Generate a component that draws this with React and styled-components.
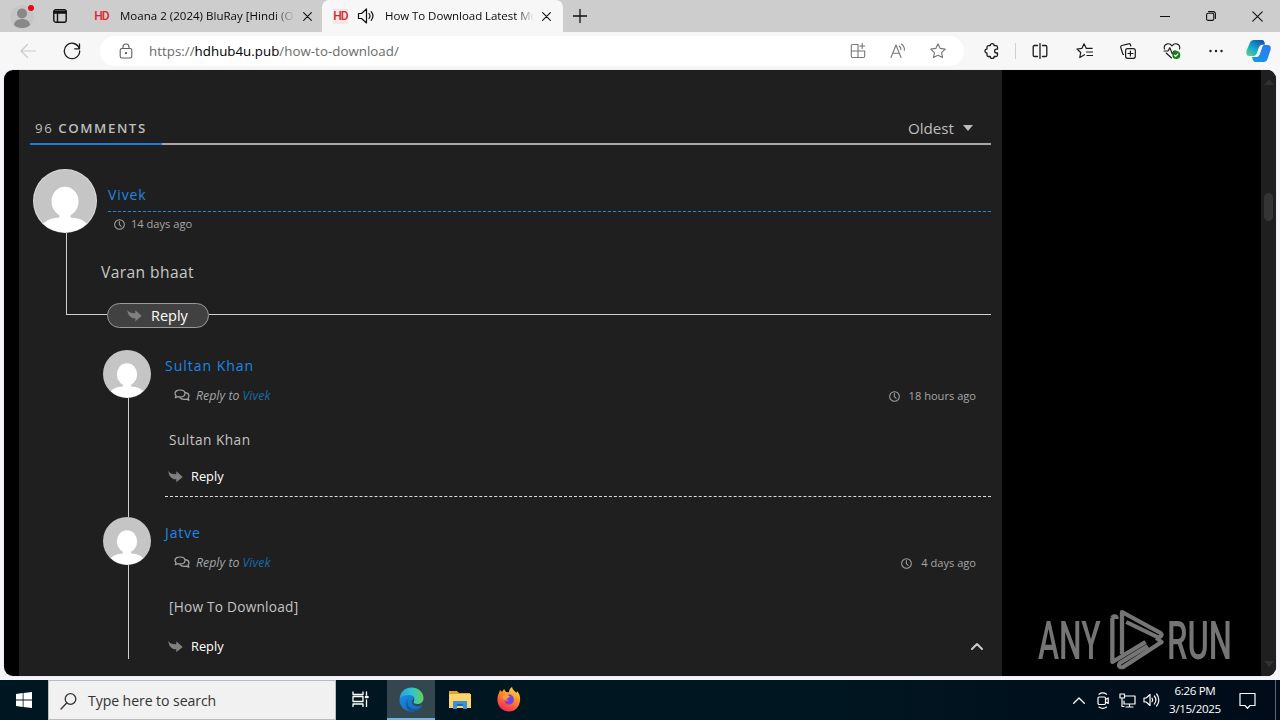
import React from "react";
import styled, { createGlobalStyle } from "styled-components";

const Global = createGlobalStyle`
  * { box-sizing: border-box; }
  html, body { margin: 0; padding: 0; }
  body { width: 1280px; height: 720px; overflow: hidden; font-family: "Open Sans", "Noto Sans", sans-serif; }
  svg { display: block; flex: none; }
`;

const Desktop = styled.div`
  width: 1280px; height: 720px; display: flex; flex-direction: column; background: #f4f5f8; overflow: hidden;
`;
const TabStrip = styled.div`
  height: 32px; flex: none; display: flex; background: #cdcdcd; color: #111;
`;
const Slot = styled.div`
  width: ${(p) => p.$w}px; flex: none; display: flex; align-items: center; justify-content: center;
  color: ${(p) => p.$c || "inherit"};
`;
const BackSlot = styled(Slot)`padding-left: 5px; color: #c9c9c9;`;
const NoticeSlot = styled(Slot)`padding-right: 8px;`;
const Tab = styled.div`
  width: ${(p) => p.$w}px; flex: none; display: flex; align-items: center;
  padding-left: ${(p) => p.$pad}px; border-radius: 7px 7px 0 0;
  background: ${(p) => (p.$active ? "#f7f7f7" : "transparent")};
`;
const Favicon = styled.span`
  width: 15px; height: 15px; flex: none; display: flex; align-items: center; justify-content: center;
  font: 500 12px/15px "Roboto", sans-serif; color: #cf2b35; letter-spacing: -1px;
  background: ${(p) => (p.$pale ? "#f8e6e6" : "#d9c8c8")};
`;
const TabTitle = styled.span`
  width: ${(p) => p.$w}px; margin-left: ${(p) => p.$ml}px; flex: none; white-space: nowrap;
  font-size: 11.5px; line-height: 18px; letter-spacing: ${(p) => p.$ls}px; color: #080808;
  mask-image: linear-gradient(90deg, #000 88%, transparent 100%);
`;
const Spacer = styled.div`flex: 1;`;

const Toolbar = styled.div`
  height: 38px; flex: none; display: flex; align-items: center; background: #f7f7f7; color: #1c1c1c;
  & > div { height: 38px; }
`;
const Toolicons = styled.div`display: flex; padding-left: 6px;`;
const Divider = styled.div`width: 1px; height: 16px; margin: 11px 2px 0; background: #cfcfcf;`;
const AddressWrap = styled.div`width: 864px; padding: 4px 0; margin-left: 6px;`;
const Address = styled.div`
  height: 30px; border-radius: 15px; background: #fff; display: flex; align-items: center; padding-left: 17px; padding-right: 6px;
`;
const Url = styled.span`
  margin-left: 15px; font-size: 13.3px; line-height: 20px; letter-spacing: 0.03px; color: #6b6b6b; white-space: nowrap;
  b { font-weight: 400; color: #000; }
`;

const Frame = styled.div`
  height: 606px; flex: none; margin: 0 4px; border-radius: 9px; overflow: hidden; display: flex; background: #000;
  box-shadow: 0 0 0 1px #eceef3;
`;
const Page = styled.div`width: 983px; margin-left: 15px; background: #1f1f1f; padding: 0 11px; display: flex; flex-direction: column;`;
const Side = styled.div`width: 259px; display: flex; align-items: flex-end; padding: 0 0 4px 36px;`;
const Scroll = styled.div`
  width: 15px; background: #1f1f1f; display: flex; flex-direction: column; align-items: center; color: #303030; padding: 9px 0 9px;
`;
const Thumb = styled.div`width: 9px; height: 28px; border-radius: 5px; background: #343434; margin: 108px 0 auto;`;

const Head = styled.div`
  height: 73px; flex: none; display: flex; justify-content: space-between; align-items: flex-end; padding: 0 18px 5px 5px; color: #bdbdbd;
`;
const Count = styled.div`
  font-size: 13.3px; line-height: 20px; letter-spacing: 1.55px; b { font-weight: 600; }
`;
const Sort = styled.div`display: flex; align-items: center; gap: 9px; font-size: 15.2px; line-height: 20px;`;
const Rule = styled.div`
  height: 2px; flex: none; background: #a9a5a8; display: flex;
  &::before { content: ""; width: 132px; background: #2279d8; }
`;

const Root = styled.div`margin-top: 24px; height: 134px; flex: none; display: flex;`;
const Rail = styled.div`width: ${(p) => p.$w}px; flex: none; display: flex; flex-direction: column; align-items: center;`;
const Stem = styled.div`width: 1px; flex: ${(p) => (p.$h ? "none" : "1")}; height: ${(p) => p.$h || 0}px; margin-left: 3px; background: #cfcfcf;`;
const RootBody = styled.div`flex: 1; padding-left: 7px;`;
const Name = styled.div`
  font-size: 14px; line-height: 20px; letter-spacing: ${(p) => p.$ls || 0.9}px; color: #1f86e4;
`;
const RootName = styled.div`
  height: 43px; padding-top: 16px; margin-left: 1px;
  background: repeating-linear-gradient(90deg, #2c83c4 0 3px, #10304a 3px 5px) 0 100% / 100% 1px no-repeat;
`;
const Time = styled.div`
  display: flex; align-items: center; gap: ${(p) => p.$gap || 6}px; font-size: 11.1px; line-height: 16px; color: #a6a6a6;
`;
const TimeRow = styled.div`padding: 4px 0 0 7px;`;
const RootText = styled.div`margin: 29px 0 0 -6px; font-size: 15.6px; line-height: 22px; letter-spacing: 0.4px; color: #c8c8c8;`;

const Foot = styled.div`height: 25px; flex: none; margin-left: 36px; display: flex;`;
const Elbow = styled.div`width: 41px; height: 12px; border-left: 1px solid #cfcfcf; border-bottom: 1px solid #cfcfcf;`;
const Line = styled.div`flex: 1; height: 12px; border-bottom: 1px solid #cfcfcf;`;
const Pill = styled.div`
  width: 102px; border: 1px solid #9a9a9a; border-radius: 13px; background: #414141; color: #fff;
  display: flex; align-items: center; padding-left: 19px; gap: 9px; font-size: 14.5px; line-height: 20px;
`;
const ThreadGap = styled.div`height: 22px; flex: none;`;

const Reply = styled.div`height: ${(p) => p.$h}px; flex: none; display: flex; padding-left: 73px;`;
const ReplyBody = styled.div`
  width: 826px; margin-left: 14px; height: 147px; padding-top: 6px;
  border-bottom: ${(p) => (p.$last ? "0" : "1px dashed #dcdcdc")};
`;
const Meta = styled.div`display: flex; justify-content: space-between; padding: 11px 15px 0 9px;`;
const To = styled.div`
  display: flex; align-items: center; font-size: 12.3px; line-height: 18px; font-style: italic; color: #a6a6a6; letter-spacing: 0.03px;
  svg { margin: -2px 6px 0 0; }
  em { color: #1a6aa8; margin-left: 3px; letter-spacing: 0.1px; }
`;
const ReplyText = styled.div`margin: 25px 0 0 4px; font-size: 13.7px; line-height: 20px; letter-spacing: ${(p) => p.$ls}px; color: #c4c4c4;`;
const ReplyAction = styled.div`
  display: flex; align-items: center; margin: ${(p) => p.$mt}px 14px 0 3px; gap: 8px; font-size: 12.8px; line-height: 20px; color: #fff;
`;

const Mark = styled.div`display: flex; align-items: center; color: #757575;`;
const Word = styled.span`
  width: ${(p) => p.$w}px; white-space: nowrap; font: 500 53px/60px "Roboto", sans-serif; transform: scaleX(${(p) => p.$s}); transform-origin: 0 50%;
  padding-top: 1px;
`;

const Taskbar = styled.div`
  height: 40px; flex: none; margin-top: 4px; display: flex; color: #fff; background: linear-gradient(90deg, #001721 0%, #001620 65%, #010b1a 100%);
`;
const Search = styled.div`
  width: 288px; background: #f1f1f1; border: 1px solid #b9bdbf; color: #333; display: flex; align-items: center; padding: 2px 0 0 11px; gap: 11px;
  font-size: 14.1px; line-height: 20px; letter-spacing: -0.08px;
`;
const TaskButton = styled.div`
  width: ${(p) => p.$w || 49}px; flex: none; display: flex; align-items: center; justify-content: center;
  background: ${(p) => (p.$active ? "#34474f" : "transparent")};
  border-bottom: 2px solid ${(p) => (p.$active ? "#78b1e2" : "transparent")};
`;
const Clock = styled.div`
  width: 64px; text-align: center; font-size: 11.6px; line-height: 18px; letter-spacing: -0.35px; padding-top: 2px; white-space: nowrap;
`;
const ShowDesk = styled.div`width: 5px; border-left: 1px solid #5d6672;`;

const Svg = ({ w = 18, h = w, vb, sw = 1.2, children }) => (
  <svg width={w} height={h} viewBox={vb || `0 0 ${w} ${h}`} fill="none" stroke="currentColor" strokeWidth={sw} strokeLinecap="round" strokeLinejoin="round">
    {children}
  </svg>
);
const Cross = ({ s = 9, sw = 1.2 }) => (
  <Svg w={s} vb="0 0 10 10" sw={sw}><path d="M.7.7l8.6 8.6M9.3.7L.7 9.3" /></Svg>
);
const Person = ({ s, ring }) => (
  <svg width={s} height={s} viewBox="0 0 64 64">
    <circle cx="32" cy="32" r="32" fill={ring ? "#dcdcdc" : "#c5c5c5"} />
    <clipPath id={"c" + s}><circle cx="32" cy="32" r="31.500" /></clipPath>
    <g clipPath={`url(#c${s})`}>
      <circle cx="32" cy="32" r="31" fill="#c5c5c5" />
      <ellipse cx="32" cy="32.500" rx="13.500" ry="14.800" fill="#fff" />
      <path d="M26.500 43h11v5.500c8 .3 13.500 3 17 7V64H9.500v-8.500c3.500-4 9-6.700 17-7z" fill="#fff" />
    </g>
  </svg>
);
const ClockIcon = () => (
  <Svg w={11} vb="0 0 12 12" sw={1.1}><circle cx="6" cy="6" r="5.300" /><path d="M5.800 2.800V6l2 2" /></Svg>
);
const Arrow = () => (
  <svg width="15" height="13" viewBox="0 0 15 13" fill="#808080"><path d="M.3.700C2 3.700 4.500 4.400 8.300 4.200V1.300L14.700 6.900 8.300 12.200V9.200C4 9.500.8 6.500.3.700z" /></svg>
);
const Chats = () => (
  <Svg w={16} h={13} sw={1.2}>
    <path d="M6 1c3 0 5 1.500 5 3.500S9 8 6 8c-.8 0-1.500-.1-2.200-.3L1.300 8.700l.8-2C1.400 6.100 1 5.300 1 4.500 1 2.500 3 1 6 1z" />
    <path d="M11.500 3.700c2.100.4 3.500 1.600 3.500 3.200 0 .8-.4 1.500-1 2l.9 2.200-2.700-1c-.6.200-1.300.3-2 .3-2 0-3.700-.8-4.400-2" />
  </Svg>
);
const Tri = ({ up }) => (
  <svg width="10" height="6" viewBox="0 0 10 6" fill="currentColor"><path d={up ? "M0 6h10L5 0z" : "M0 0h10L5 6z"} /></svg>
);
const Speaker = () => (
  <Svg w={18} sw={1.2}><path d="M1.500 6.500h3L9.500 2v14l-5-4.500h-3zM12 6.500c1.200 1.500 1.200 3.500 0 5M14.200 4.700c2.100 2.600 2.100 6 0 8.600" /></Svg>
);

const replies = [
  { name: "Sultan Khan", ls: 0.98, text: "Sultan Khan", tls: 0.45, time: "18 hours ago", h: 167, mt: 16 },
  { name: "Jatve", ls: 0.9, text: "[How To Download]", tls: 0.22, time: "4 days ago", h: 159, mt: 19, last: true },
];

function TopTabs() {
  return (
    <TabStrip>
      <Slot $w={44}>
        <svg width="28" height="28" viewBox="0 0 28 28">
          <circle cx="14" cy="15" r="12" fill="#c8c6c5" />
          <circle cx="14" cy="11.500" r="5" fill="#888" /><path d="M6 23c0-8 16-8 16 0-3 4-13 4-16 0z" fill="#888" />
          <circle cx="23" cy="6" r="3" fill="#e40b18" />
        </svg>
      </Slot>
      <Slot $w={32}><Svg w={14} h={14} sw={1.4}><rect x=".8" y=".8" width="12.400" height="12.400" rx="2" /><path d="M1 2.500h12M1 4h12M4.500 4v9" /></Svg></Slot>
      <Tab $w={246} $pad={18}>
        <Favicon>HD</Favicon>
        <TabTitle $w={175} $ml={11} $ls={0.02}>Moana 2 (2024) BluRay [Hindi (O</TabTitle>
        <Slot $w={24}><Cross /></Slot>
      </Tab>
      <Tab $w={241} $pad={11} $active>
        <Favicon $pale>HD</Favicon>
        <Slot $w={36}><Speaker /></Slot>
        <TabTitle $w={149} $ml={1} $ls={-0.06}>How To Download Latest Mo</TabTitle>
        <Slot $w={24}><Cross /></Slot>
      </Tab>
      <Slot $w={33}><Svg w={14} sw={1.3}><path d="M7 0v14M0 7h14" /></Svg></Slot>
      <Spacer />
      <Slot $w={46}><Svg w={10} sw={1}><path d="M0 5.500h10" /></Svg></Slot>
      <Slot $w={46}><Svg w={10} sw={1.1}><rect x=".6" y="2.200" width="7.200" height="7.200" rx="1.500" /><path d="M2.500.6h4.700a2.200 2.200 0 012.200 2.200v4.700" /></Svg></Slot>
      <Slot $w={46}><Cross s={11} sw={1} /></Slot>
    </TabStrip>
  );
}

function Tools() {
  return (
    <Toolbar>
      <BackSlot $w={50}><Svg w={16} sw={1.2}><path d="M15.500 8H1M7.500 1.500L1 8l6.500 6.500" /></Svg></BackSlot>
      <Slot $w={44}><Svg w={18} sw={1.3}><path d="M16.300 6.500A7.700 7.700 0 1 0 16.700 9M16.500 2v4.800h-4.800" /></Svg></Slot>
      <AddressWrap>
        <Address>
          <Slot $w={17} $c="#5f5f5f"><Svg w={14} h={16} sw={1.1}><rect x="1.200" y="5.500" width="11.600" height="9.500" rx="1.800" /><path d="M4 5.500V4a3 3 0 016 0v1.500" /><circle cx="7" cy="10.200" r=".6" fill="currentColor" /></Svg></Slot>
          <Url>https://<b>hdhub4u.pub</b>/how-to-download/</Url>
          <Spacer />
          <Slot $w={40} $c="#777"><Svg w={16} sw={1.1}><path d="M8 1.500H2.500c-.8 0-1.200.5-1.200 1.200v10.600c0 .7.400 1.200 1.200 1.200h11c.7 0 1.200-.5 1.200-1.200V8H1.300M8 1.500v13M12.200.5v5M9.700 3h5" /></Svg></Slot>
          <Slot $w={40} $c="#777"><Svg w={16} sw={1.1}><path d="M1 14.500L6 2l5 12.500M2.700 10.200h6.600M9.200 3c1.300 1 1.800 2.200 1.700 3.700M11.400 1c2.200 1.500 3.200 3.600 3 6.300" /></Svg></Slot>
          <Slot $w={40} $c="#777"><Svg w={16} sw={1.1}><path d="M8 .8l2.200 4.600 5 .7-3.600 3.500.9 5L8 12.200l-4.500 2.400.9-5L.8 6.100l5-.7z" /></Svg></Slot>
        </Address>
      </AddressWrap>
      <Toolicons>
        <Slot $w={43}>
          <Svg w={16} sw={1.3}><path d="M4.500 2.700h1.700a2 2 0 014 0h1.800c1 0 1.500.6 1.500 1.500v2h-1a1.900 1.900 0 000 3.800h1v2c0 .9-.6 1.500-1.500 1.500h-1.800a2 2 0 01-4 0H4.500c-.9 0-1.500-.6-1.500-1.500v-1.900a2 2 0 010-4V4.200c0-.9.6-1.500 1.500-1.500z" /></Svg>
        </Slot>
        <Divider />
        <Slot $w={44}><Svg w={16} sw={1.3}><path d="M5.500 2.500h-3c-.8 0-1.300.5-1.300 1.300v8.400c0 .8.500 1.300 1.300 1.300h3M10.500 2.500h3c.8 0 1.300.5 1.300 1.300v8.400c0 .8-.5 1.300-1.300 1.300h-3M8 .5v15" /></Svg></Slot>
        <Slot $w={44}><Svg w={17} h={16} sw={1.2}><path d="M8.500 11.700L3.800 14.500l.9-5L1 6l5-.7L8 .8l2.200 4.500h6M10.500 9h6M11 12.500h5.500" /></Svg></Slot>
        <Slot $w={44}><Svg w={16} sw={1.2}><rect x="5.600" y="5.600" width="9.700" height="9.700" rx="2" /><path d="M10.400 8v5M8 10.500h5M3.500 11.500L2.800 11 .8 4.500c-.3-1 .2-1.700 1-2L8.500.8c1-.3 1.600.2 2 1l.3 1.200" /></Svg></Slot>
        <Slot $w={44}><Svg w={18} h={16} sw={1.15}><path d="M1.500 6C0 1 6-1 9 2.800 12-1 18 1 16.500 6M3.200 10L8.500 15M1 8h4l1.800-3.300 2.500 6L11 8h2" /><circle cx="13.300" cy="12" r="4" fill="#13801c" stroke="none" /><path d="M11.500 12.300l1.200 1 2.300-2.500" stroke="#fff" /></Svg></Slot>
        <Slot $w={44}><Svg w={14} h={4} sw={0}><g fill="currentColor"><circle cx="1.500" cy="2" r="1.200" /><circle cx="7" cy="2" r="1.200" /><circle cx="12.500" cy="2" r="1.200" /></g></Svg></Slot>
        <Slot $w={40}>
          <svg width="25" height="24" viewBox="0 0 25 24">
            <defs>
              <linearGradient id="cpa" x1="0" y1="1" x2=".7" y2="0"><stop stopColor="#5ad68a" /><stop offset=".5" stopColor="#18a7c9" /><stop offset="1" stopColor="#1059b4" /></linearGradient>
              <linearGradient id="cpb" x1="0" y1="1" x2="1" y2="0"><stop stopColor="#1599e6" /><stop offset="1" stopColor="#2f78ee" /></linearGradient>
            </defs>
            <path d="M8 1h8c2 0 2.500 1.500 3 4.500l-4 .5c-2 1-2.500 3-3.300 6-.9 3-1.700 5-4.700 5H3.500C0 17 0 14 .8 11l3-7C4.600 2 6 1 8 1z" fill="url(#cpa)" />
            <path d="M18 6h4c3 0 3 3 2.500 5l-3 9c-.8 2.200-2 3-4 3h-8c-2 0-2.700-1.500-3.500-5h4c2 0 3-1 4-4l2-5c.4-2 1-3 2-3z" fill="url(#cpb)" />
            <path d="M14.500 7.500c.5-1 1.500-1.500 2.700-1.500-.8 1-1.200 2-1.700 3.500l-1.500 4.500c-.8 2.500-1.500 3.600-3.300 3.900l-2.200.1c1.300-.8 2-2.500 2.700-4.500z" fill="#f7f7f7" />
          </svg>
        </Slot>
      </Toolicons>
    </Toolbar>
  );
}

function Comments() {
  return (
    <Page>
      <Head>
        <Count>96 <b>COMMENTS</b></Count>
        <Sort>Oldest <Tri /></Sort>
      </Head>
      <Rule />
      <Root>
        <Rail $w={70}><Person s={64} ring /><Stem /></Rail>
        <RootBody>
          <RootName><Name>Vivek</Name></RootName>
          <TimeRow><Time><ClockIcon />14 days ago</Time></TimeRow>
          <RootText>Varan bhaat</RootText>
        </RootBody>
      </Root>
      <Foot>
        <Elbow /><Pill><Arrow />Reply</Pill><Line />
      </Foot>
      <ThreadGap />
      {replies.map((r) => (
        <Reply key={r.name} $h={r.h}>
          <Rail $w={48}><Person s={48} /><Stem $h={r.last ? 94 : 119} /></Rail>
          <ReplyBody $last={r.last}>
            <Name $ls={r.ls}>{r.name}</Name>
            <Meta>
              <To><Chats />Reply to <em>Vivek</em></To>
              <Time $gap={9}><ClockIcon />{r.time}</Time>
            </Meta>
            <ReplyText $ls={r.tls}>{r.text}</ReplyText>
            <ReplyAction $mt={r.mt}>
              <Arrow />Reply
              {r.last && <><Spacer /><Slot $w={0} $c="#c9c9c9"><Svg w={12} h={8} sw={2}><path d="M1 7l5-5 5 5" /></Svg></Slot></>}
            </ReplyAction>
          </ReplyBody>
        </Reply>
      ))}
    </Page>
  );
}

function Bar() {
  return (
    <Taskbar>
      <Slot $w={48}><svg width="16" height="16" viewBox="0 0 16 16" fill="#fff"><path d="M0 2l6.700-.9v6.500H0zM7.500 1L16 0v7.600H7.500zM0 8.400h6.700v6.500L0 14zM7.500 8.400H16V16l-8.500-1.100z" /></svg></Slot>
      <Search><Svg w={17} sw={1.3}><circle cx="10.500" cy="6" r="5.300" /><path d="M6.700 10L1 16" /></Svg>Type here to search</Search>
      <TaskButton $w={51}><Svg w={20} h={16} sw={1.3}><path d="M1 1v2.500h10V1M1 15.500V13h10v2.500M1 5.500h10v5H1zM14.500 1v3M14.500 9v6.500" /><path d="M14 6h1.500" strokeWidth="2.500" /></Svg></TaskButton>
      <TaskButton $w={48} $active>
        <svg width="25" height="25" viewBox="0 0 25 25">
          <defs>
            <linearGradient id="e1" x1="0" x2="1"><stop stopColor="#2a9ee0" /><stop offset=".5" stopColor="#2cc4cf" /><stop offset="1" stopColor="#66d15b" /></linearGradient>
            <linearGradient id="e2" x1="0" y1="0" x2="1" y2="1"><stop stopColor="#1b8fe0" /><stop offset="1" stopColor="#1463b8" /></linearGradient>
          </defs>
          <path d="M.7 11C2 7.500 5 6 8.500 6.500c4 .5 6.500 3 6 5.500-1.500 1.500-2 3-1.200 4.500 1.500 3 6.500 3.500 10.200 1.500-2 4-6 6.500-11 6.500C5.500 24.500.3 19 .5 12.500z" fill="url(#e2)" />
          <path d="M.7 11C1.500 4.500 6.500.5 12.500.5c7 0 12 5 12 10.500 0 4-3 6-6 6-2.500 0-4.300-1-4-2 1.800-2.500 1-7-4.500-7C6 8 2.500 9 .7 11z" fill="url(#e1)" />
          <path d="M9.500 11.500c-3 4-.5 10.500 6.500 10.800 2.500 0 4.500-1 6-2.500C20 23 16 24.800 12 24.500 6.500 22.500 5.500 14.500 9.500 11.500z" fill="#155a9f" />
        </svg>
      </TaskButton>
      <TaskButton $w={50}>
        <svg width="22" height="19" viewBox="0 0 22 19"><path d="M0 1h8l2 2h11v4H0z" fill="#e5a51f" /><path d="M0 4h22v14H0z" fill="#fbd56c" /><path d="M4 11h14v8h-4v-4H8v4H4z" fill="#3b91d6" /><path d="M8 14h6v2H8z" fill="#196cae" /></svg>
      </TaskButton>
      <TaskButton $w={48}>
        <svg width="24" height="25" viewBox="0 0 24 25">
          <defs><linearGradient id="fx" x1=".8" y1="0" x2=".3" y2="1"><stop stopColor="#ffe14a" /><stop offset=".45" stopColor="#ff8b28" /><stop offset="1" stopColor="#f4225c" /></linearGradient></defs>
          <path d="M2 6l1-3 2 2 2-3 2 3 3 .3C12 3 13 1 15 0c.5 3 3 4 4.500 6L20 4c2.500 2.500 3.500 6 3 9.500C22.500 20 18 24.500 12 24.500S1 20 .5 14C.2 11 .8 8 2 6z" fill="url(#fx)" />
          <path d="M8 10c1-2.500 5-3.500 7.500-1 2.500 3 1.500 8-3 8.500-3 .3-5-1.500-5-4 1.500 1 3 .8 4.500-.5-2 .2-3-1-4-3z" fill="#7542e5" />
          <path d="M5 9l4-2 4 2.500-2.500 2L7 13z" fill="#ff9c33" />
        </svg>
      </TaskButton>
      <Spacer />
      <Slot $w={24}><Svg w={12} h={7} sw={1.3}><path d="M.7 6.300L6 1l5.300 5.300" /></Svg></Slot>
      <Slot $w={24}><Svg w={12} h={17} sw={1.2}><rect x="1" y="5" width="7.500" height="7.500" rx="1.200" /><path d="M8.500 7.500l2.700-1.500v5.500L8.500 10M2 2.200c2.300-1.600 5.300-1.600 7.600 0M2 15c2.300 1.600 5.300 1.600 7.600 0" /></Svg></Slot>
      <Slot $w={24}><Svg w={17} h={15} sw={1.2}><path d="M6 3h10v8H5V8M10.500 11v3M7 14h7M1 1h4.500v4H1zM3 5v8.500h2" /></Svg></Slot>
      <Slot $w={24}><Svg w={17} h={16} sw={1.2}><path d="M1 6h2.200L7 2.500v11L3.200 10H1zM9 6.200c.8 1 .8 2.500 0 3.500M11.300 4c1.900 2.300 1.900 5.600 0 8M13.600 2c3 3.500 3 8.500 0 12" /></Svg></Slot>
      <Clock>6:26 PM<br />3/15/2025</Clock>
      <NoticeSlot $w={48}><Svg w={17} sw={1.2}><path d="M1 1.500h15v12h-5l-2.500 2.800L6 13.500H1z" /></Svg></NoticeSlot>
      <ShowDesk />
    </Taskbar>
  );
}

export default function App() {
  return (
    <Desktop>
      <Global />
      <TopTabs />
      <Tools />
      <Frame>
        <Comments />
        <Side>
          <Mark>
            <Word $w={69} $s={0.6}>ANY</Word>
            <svg width="60" height="64" viewBox="0 0 56 64" preserveAspectRatio="none" fill="none" stroke="currentColor" strokeWidth="4" strokeLinejoin="round">
              <path d="M5 10v44l31-20M5 10c1-3 4-2 4 1" />
              <path d="M14 46V4l36 21c2 2 0 5-3 4L18 14" />
              <path d="M46 30l5 4-36 25c-3 1-5-1-3-4l26-17" />
            </svg>
            <Word $w={62} $s={0.615}>RUN</Word>
          </Mark>
        </Side>
        <Scroll><Tri up /><Thumb /><Tri /></Scroll>
      </Frame>
      <Bar />
    </Desktop>
  );
}
